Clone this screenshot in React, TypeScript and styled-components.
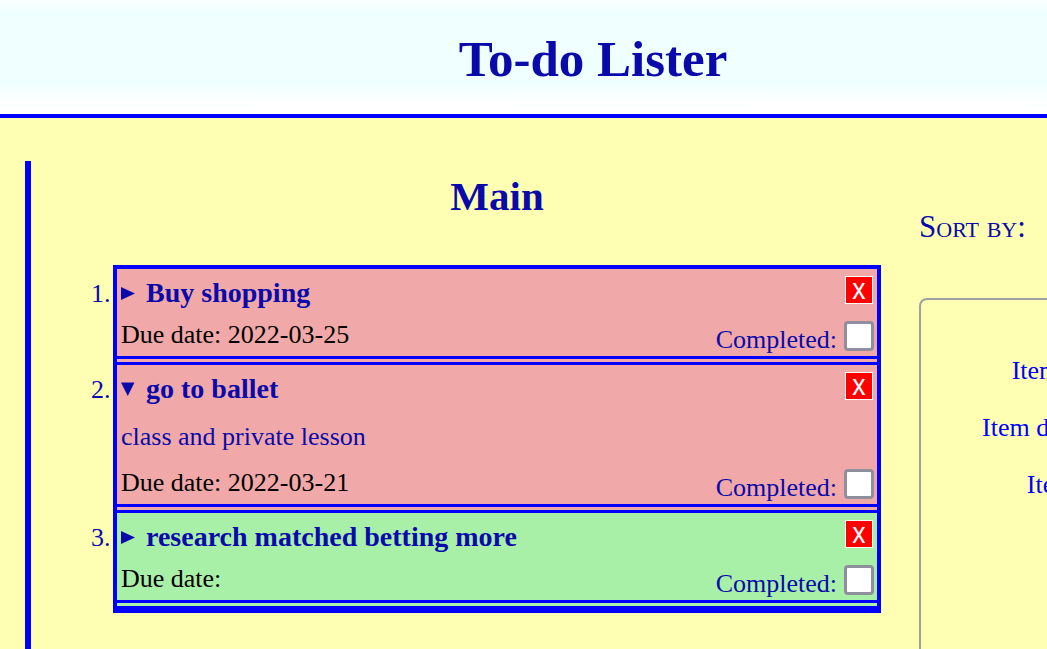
import React from 'react';
import styled, { createGlobalStyle } from 'styled-components';

const GlobalStyle = createGlobalStyle`
  * { box-sizing: border-box; }
  html { scrollbar-width: none; background: #ffffb3; }
  body {
    margin: 0;
    color: #0a0aaa;
    font-family: "Liberation Serif", "Times New Roman", serif;
    font-size: 26px;
    line-height: 30px;
  }
`;

const Page = styled.div`
  min-width: 1186px;
  min-height: 100vh;
  display: flex;
  flex-direction: column;
`;

const Header = styled.header`
  padding: 29px 16px 25px;
  border-bottom: 4px solid #0000ff;
  background: linear-gradient(#fafffe 0, #f0ffff 12px, #f0ffff 82px, #ffffff 108px);
  text-align: center;
`;

const Title = styled.h1`
  margin: 0;
  font-size: 51px;
  line-height: 60px;
`;

const Content = styled.main`
  flex: 1;
  display: flex;
  align-items: stretch;
  gap: 8px;
  padding: 43px 0 0 25px;
`;

const Project = styled.section`
  flex: 1;
  padding: 0 30px 0 82px;
  border-left: 6px solid #0000ff;
`;

const ProjectTitle = styled.h2`
  margin: 12px 0 45px;
  font-size: 41px;
  line-height: 47px;
  text-align: center;
`;

const List = styled.ol`
  margin: 0;
  padding: 0;
  border: 4px solid #0000ff;
`;

const Item = styled.li<{ $done?: boolean }>`
  padding-bottom: 3px;
  border-bottom: 3px solid #0000ff;
  background: ${(p) => (p.$done ? '#a8f0a8' : '#f0a8a8')};
`;

const ItemBody = styled.div`
  display: flex;
  justify-content: space-between;
  padding: 4px 3px 1px 4px;
  border-bottom: 3px solid #0000ff;
`;

const Info = styled.div`
  display: flex;
  flex-direction: column;
`;

const Arrow = styled.svg`
  width: 14px;
  height: 16px;
  margin-right: 11px;
  fill: currentColor;
`;

const Summary = styled.summary`
  display: block;
  font-size: 28px;
  font-weight: bold;
  line-height: 32px;
  cursor: pointer;
`;

const Details = styled.details`
  padding-top: 4px;

  & .down { display: none; }
  &[open] .down { display: inline; }
  &[open] .right { display: none; }
`;

const Description = styled.p`
  margin: 17px 0 5px;
`;

const DueDate = styled.p`
  margin: 11px 0 5px;
  color: #000000;
`;

const Actions = styled.div`
  display: flex;
  flex-direction: column;
  align-items: flex-end;
  justify-content: space-between;
  padding-top: 3px;
`;

const Remove = styled.button`
  width: 28px;
  height: 28px;
  margin-right: 1px;
  padding: 2px 0 0;
  border: 1px solid #ffffff;
  background: #ff0000;
  color: #ffffff;
  font: 500 21px/24px "Noto Sans", sans-serif;
`;

const Completed = styled.label`
  display: flex;
  align-items: flex-end;
  gap: 7px;
`;

const Check = styled.input`
  appearance: none;
  width: 30px;
  height: 30px;
  margin: 0 0 4px;
  border: 3px solid #8f8f9d;
  border-radius: 4px;
  background: #ffffff;

  &:checked { background: #0a0aaa; }
`;

const Sidebar = styled.aside`
  display: flex;
  flex-direction: column;
  width: 267px;
`;

const SortLabel = styled.p`
  margin: 48px 0 53px;
  font-size: 31px;
  line-height: 36px;
  font-variant: small-caps;
`;

const ItemForm = styled.form`
  flex: 1;
  display: flex;
  flex-direction: column;
  gap: 27px;
  padding: 56px 4px 0 40px;
  border: 2px solid #a0a0a0;
  border-bottom: 0;
  border-radius: 8px 8px 0 0;
  color: #0000ff;
  text-align: center;
`;

const Field = styled.div``;

const items = [
  { title: 'Buy shopping', due: '2022-03-25', description: '', open: false, done: false },
  { title: 'go to ballet', due: '2022-03-21', description: 'class and private lesson', open: true, done: false },
  { title: 'research matched betting more', due: '', description: '', open: false, done: true },
];

export default function App() {
  return (
    <Page>
      <GlobalStyle />
      <Header>
        <Title>To-do Lister</Title>
      </Header>
      <Content>
        <Project>
          <ProjectTitle>Main</ProjectTitle>
          <List>
            {items.map((item) => (
              <Item key={item.title} $done={item.done}>
                <ItemBody>
                  <Info>
                    <Details open={item.open}>
                      <Summary>
                        <Arrow viewBox="0 0 14 16" aria-hidden="true">
                          <path className="right" d="M0 1 L14 7.5 L0 14 Z" />
                          <path className="down" d="M0 0.5 H13.5 L6.75 14 Z" />
                        </Arrow>
                        {item.title}
                      </Summary>
                      {item.description && <Description>{item.description}</Description>}
                    </Details>
                    <DueDate>Due date: {item.due}</DueDate>
                  </Info>
                  <Actions>
                    <Remove type="button" aria-label={`Remove ${item.title}`}>X</Remove>
                    <Completed>
                      Completed:
                      <Check type="checkbox" />
                    </Completed>
                  </Actions>
                </ItemBody>
              </Item>
            ))}
          </List>
        </Project>
        <Sidebar>
          <SortLabel>Sort by:</SortLabel>
          <ItemForm>
            <Field>Item name:</Field>
            <Field>Item description:</Field>
            <Field>Item by:</Field>
          </ItemForm>
        </Sidebar>
      </Content>
    </Page>
  );
}
